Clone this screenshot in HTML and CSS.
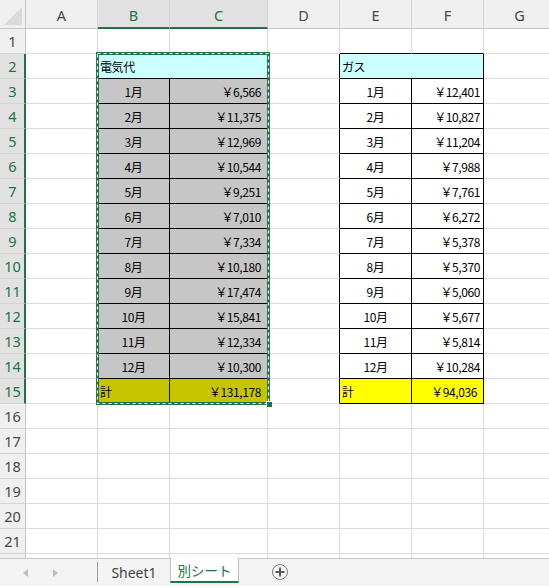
FILE: index.html
```html
<!DOCTYPE html>
<html lang="ja">
<head>
<meta charset="utf-8">
<title>別シート</title>
<link rel="stylesheet" href="styles.css">
</head>
<body>
<div class="app">
  <div class="sheet">
    <div class="grid">
      <!-- header row -->
      <div class="c corner"><span class="tri-corner"></span></div>
      <div class="c ch">A</div>
      <div class="c ch sel">B</div>
      <div class="c ch sel">C</div>
      <div class="c ch">D</div>
      <div class="c ch">E</div>
      <div class="c ch">F</div>
      <div class="c ch">G</div>
      <!-- row 1 -->
      <div class="c rh">1</div>
      <div class="c"></div><div class="c bb"></div><div class="c bb"></div><div class="c"></div><div class="c bb"></div><div class="c bb"></div><div class="c"></div>
      <!-- row 2 -->
      <div class="c rh sel">2</div>
      <div class="c rb"></div>
      <div class="c t cy l span2">電気代</div>
      <div class="c rb"></div>
      <div class="c t cy l span2">ガス</div>
      <div class="c"></div>
      <!-- row 3 -->
      <div class="c rh sel">3</div><div class="c rb"></div>
      <div class="c t gy m">1月</div><div class="c t gy r">￥6,566</div>
      <div class="c rb"></div>
      <div class="c t m">1月</div><div class="c t r f">￥12,401</div>
      <div class="c"></div>
      <!-- row 4 -->
      <div class="c rh sel">4</div><div class="c rb"></div>
      <div class="c t gy m">2月</div><div class="c t gy r">￥11,375</div>
      <div class="c rb"></div>
      <div class="c t m">2月</div><div class="c t r f">￥10,827</div>
      <div class="c"></div>
      <!-- row 5 -->
      <div class="c rh sel">5</div><div class="c rb"></div>
      <div class="c t gy m">3月</div><div class="c t gy r">￥12,969</div>
      <div class="c rb"></div>
      <div class="c t m">3月</div><div class="c t r f">￥11,204</div>
      <div class="c"></div>
      <!-- row 6 -->
      <div class="c rh sel">6</div><div class="c rb"></div>
      <div class="c t gy m">4月</div><div class="c t gy r">￥10,544</div>
      <div class="c rb"></div>
      <div class="c t m">4月</div><div class="c t r f">￥7,988</div>
      <div class="c"></div>
      <!-- row 7 -->
      <div class="c rh sel">7</div><div class="c rb"></div>
      <div class="c t gy m">5月</div><div class="c t gy r">￥9,251</div>
      <div class="c rb"></div>
      <div class="c t m">5月</div><div class="c t r f">￥7,761</div>
      <div class="c"></div>
      <!-- row 8 -->
      <div class="c rh sel">8</div><div class="c rb"></div>
      <div class="c t gy m">6月</div><div class="c t gy r">￥7,010</div>
      <div class="c rb"></div>
      <div class="c t m">6月</div><div class="c t r f">￥6,272</div>
      <div class="c"></div>
      <!-- row 9 -->
      <div class="c rh sel">9</div><div class="c rb"></div>
      <div class="c t gy m">7月</div><div class="c t gy r">￥7,334</div>
      <div class="c rb"></div>
      <div class="c t m">7月</div><div class="c t r f">￥5,378</div>
      <div class="c"></div>
      <!-- row 10 -->
      <div class="c rh sel">10</div><div class="c rb"></div>
      <div class="c t gy m">8月</div><div class="c t gy r">￥10,180</div>
      <div class="c rb"></div>
      <div class="c t m">8月</div><div class="c t r f">￥5,370</div>
      <div class="c"></div>
      <!-- row 11 -->
      <div class="c rh sel">11</div><div class="c rb"></div>
      <div class="c t gy m">9月</div><div class="c t gy r">￥17,474</div>
      <div class="c rb"></div>
      <div class="c t m">9月</div><div class="c t r f">￥5,060</div>
      <div class="c"></div>
      <!-- row 12 -->
      <div class="c rh sel">12</div><div class="c rb"></div>
      <div class="c t gy m">10月</div><div class="c t gy r">￥15,841</div>
      <div class="c rb"></div>
      <div class="c t m">10月</div><div class="c t r f">￥5,677</div>
      <div class="c"></div>
      <!-- row 13 -->
      <div class="c rh sel">13</div><div class="c rb"></div>
      <div class="c t gy m">11月</div><div class="c t gy r">￥12,334</div>
      <div class="c rb"></div>
      <div class="c t m">11月</div><div class="c t r f">￥5,814</div>
      <div class="c"></div>
      <!-- row 14 -->
      <div class="c rh sel">14</div><div class="c rb"></div>
      <div class="c t gy m">12月</div><div class="c t gy r">￥10,300</div>
      <div class="c rb"></div>
      <div class="c t m">12月</div><div class="c t r f">￥10,284</div>
      <div class="c"></div>
      <!-- row 15 -->
      <div class="c rh sel">15</div><div class="c rb"></div>
      <div class="c t ol l">計</div><div class="c t ol r">￥131,178</div>
      <div class="c rb"></div>
      <div class="c t ye l">計</div><div class="c t ye r">￥94,036</div>
      <div class="c"></div>
      <!-- rows 16-22 -->
      <div class="c rh">16</div><div class="c"></div><div class="c"></div><div class="c"></div><div class="c"></div><div class="c"></div><div class="c"></div><div class="c"></div>
      <div class="c rh">17</div><div class="c"></div><div class="c"></div><div class="c"></div><div class="c"></div><div class="c"></div><div class="c"></div><div class="c"></div>
      <div class="c rh">18</div><div class="c"></div><div class="c"></div><div class="c"></div><div class="c"></div><div class="c"></div><div class="c"></div><div class="c"></div>
      <div class="c rh">19</div><div class="c"></div><div class="c"></div><div class="c"></div><div class="c"></div><div class="c"></div><div class="c"></div><div class="c"></div>
      <div class="c rh">20</div><div class="c"></div><div class="c"></div><div class="c"></div><div class="c"></div><div class="c"></div><div class="c"></div><div class="c"></div>
      <div class="c rh">21</div><div class="c"></div><div class="c"></div><div class="c"></div><div class="c"></div><div class="c"></div><div class="c"></div><div class="c"></div>
      <div class="c rh"></div><div class="c"></div><div class="c"></div><div class="c"></div><div class="c"></div><div class="c"></div><div class="c"></div><div class="c"></div>
    </div>
    <div class="ants">
      <svg width="174" height="353" viewBox="0 0 174 353">
        <rect x="1.5" y="1.5" width="171" height="350" fill="none" stroke="#217346" stroke-width="3"/>
        <rect x="1.5" y="1.5" width="171" height="350" fill="none" stroke="#ffffff" stroke-width="1.2" stroke-dasharray="3 3"/>
      </svg>
      <span class="handle"></span>
    </div>
  </div>
  <div class="tabs">
    <div class="nav">
      <svg class="arrow" width="6" height="8" viewBox="0 0 6 8"><path d="M5 0 L0 4 L5 8 Z" fill="#bdbdbd"/></svg>
      <svg class="arrow" width="6" height="8" viewBox="0 0 6 8"><path d="M1 0 L6 4 L1 8 Z" fill="#bdbdbd"/></svg>
    </div>
    <div class="sep"></div>
    <div class="tab">Sheet1</div>
    <div class="tab active">別シート</div>
    <div class="add">
      <svg width="18" height="18" viewBox="0 0 18 18">
        <circle cx="9" cy="9" r="7.5" fill="none" stroke="#7a7a7a" stroke-width="1"/>
        <path d="M9 4.5 V13.5 M4.5 9 H13.5" stroke="#5a5a5a" stroke-width="2"/>
      </svg>
    </div>
  </div>
  <div class="foot"></div>
</div>
</body>
</html>
```

FILE: styles.css
```css
* { box-sizing: border-box; }
html, body { margin: 0; padding: 0; background: #ffffff; }
body {
  font-family: "Noto Sans CJK JP", "Noto Sans", sans-serif;
}
.app {
  width: 549px;
  height: 588px;
  overflow: hidden;
  display: flex;
  flex-direction: column;
  background: #ffffff;
}
.sheet {
  position: relative;
  height: 558px;
  overflow: hidden;
  flex: none;
}
.grid {
  display: grid;
  grid-template-columns: 26px 72px 72px 98px 72px 72px 72px 72px;
  grid-template-rows: 29px;
  grid-auto-rows: 25px;
  width: 556px;
}
.c {
  border-right: 1px solid #dcdcdc;
  border-bottom: 1px solid #dcdcdc;
  font-size: 12px;
  color: #000;
  display: flex;
  align-items: center;
  white-space: nowrap;
  overflow: hidden;
  letter-spacing: -0.4px;
}
/* headers */
.corner {
  background: #efefef;
  border-right: 1px solid #c6c6c6;
  border-bottom: 1px solid #c6c6c6;
  position: relative;
}
.tri-corner {
  position: absolute;
  right: 3px;
  bottom: 3px;
  width: 0;
  height: 0;
  border-left: 18px solid transparent;
  border-bottom: 18px solid #dadada;
}
.ch {
  background: #efefef;
  justify-content: center;
  font-family: "Noto Sans", sans-serif;
  font-size: 14.5px;
  color: #474747;
  border-right: 1px solid #d4d4d4;
  border-bottom: 1px solid #c6c6c6;
  letter-spacing: 0;
  padding-top: 1px;
}
.ch.sel {
  background: #e1e1e1;
  color: #217346;
  border-bottom: 2px solid #217346;
  padding-top: 2px;
}
.rh {
  background: #efefef;
  justify-content: center;
  font-family: "Noto Sans", sans-serif;
  font-size: 14.5px;
  color: #474747;
  border-right: 1px solid #c6c6c6;
  border-bottom: 1px solid #d4d4d4;
  letter-spacing: 0;
}
.rh.sel {
  background: #e1e1e1;
  color: #217346;
  border-right: 2px solid #217346;
  padding-left: 1px;
}
/* table borders */
.rb { border-right-color: #000; }
.bb { border-bottom-color: #000; }
.t { border-right-color: #000; border-bottom-color: #000; }
.span2 { grid-column: span 2; }
.cy { background: #ccffff; }
.gy { background: #c6c6c6; }
.ol { background: #c6c600; }
.ye { background: #ffff00; }
.l { justify-content: flex-start; padding-left: 2px; }
.m { justify-content: center; }
.r { justify-content: flex-end; padding-right: 6px; }
.r.f { padding-right: 3px; }

/* selection marquee */
.ants {
  position: absolute;
  left: 96px;
  top: 52px;
  width: 174px;
  height: 353px;
  pointer-events: none;
}
.ants svg { display: block; }
.handle {
  position: absolute;
  right: -3px;
  bottom: -3px;
  width: 7px;
  height: 7px;
  background: #217346;
  border: 1px solid #ffffff;
}

/* sheet tabs */
.tabs {
  height: 28px;
  flex: none;
  display: flex;
  align-items: stretch;
  background: #f3f3f3;
  border-top: 1px solid #c6c6c6;
}
.nav {
  width: 97px;
  display: flex;
  align-items: center;
  padding-left: 23px;
  gap: 23px;
}
.arrow { display: block; }
.sep {
  width: 1px;
  background: #a0a0a0;
  margin: 3px 0 4px;
}
.tab {
  width: 72px;
  display: flex;
  align-items: center;
  justify-content: center;
  font-family: "Noto Sans", "Noto Sans CJK JP", sans-serif;
  font-size: 14px;
  color: #444;
  padding-bottom: 1px;
}
.tab.active {
  width: 69px;
  margin-top: -1px;
  background: #ffffff;
  color: #217346;
  border-left: 1px solid #c0c0c0;
  border-right: 1px solid #c0c0c0;
  border-bottom: 2px solid #217346;
  margin-bottom: 3px;
  font-family: "Noto Sans CJK JP", sans-serif;
  font-size: 13.5px;
  padding-bottom: 0;
}
.add {
  display: flex;
  align-items: center;
  padding-left: 32px;
  padding-bottom: 1px;
}
.add svg { display: block; }
.foot {
  flex: 1;
  background: #ffffff;
}
```
